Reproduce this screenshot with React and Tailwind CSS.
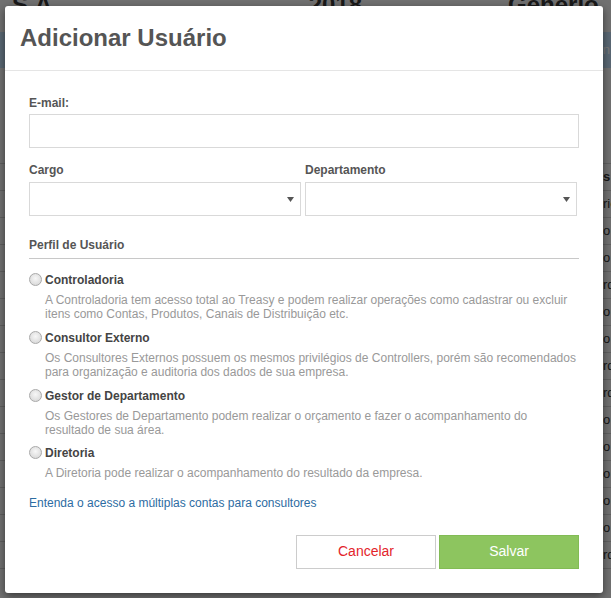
import React from 'react';

const rightCells = ['s', 'rio', 'o', 'o', 'rd', 'o', 'o', 'rd', 'rd', 'o', 'o', 'o', 'o', 'o', 'rd'];

const perfis = [
  {
    nome: 'Controladoria',
    linhas: [
      'A Controladoria tem acesso total ao Treasy e podem realizar operações como cadastrar ou excluir',
      'itens como Contas, Produtos, Canais de Distribuição etc.',
    ],
  },
  {
    nome: 'Consultor Externo',
    linhas: [
      'Os Consultores Externos possuem os mesmos privilégios de Controllers, porém são recomendados',
      'para organização e auditoria dos dados de sua empresa.',
    ],
  },
  {
    nome: 'Gestor de Departamento',
    linhas: [
      'Os Gestores de Departamento podem realizar o orçamento e fazer o acompanhamento do',
      'resultado de sua área.',
    ],
  },
  {
    nome: 'Diretoria',
    linhas: ['A Diretoria pode realizar o acompanhamento do resultado da empresa.'],
  },
];

const Caret = () => (
  <svg width="7" height="5" viewBox="0 0 7 5">
    <path d="M0 0 L7 0 L3.5 5 Z" fill="#555" />
  </svg>
);

const FakeSelect = () => (
  <div className="w-[272px] h-[34px] border border-[#d9d9d9] bg-white flex items-center justify-end pr-[6px]">
    <Caret />
  </div>
);

const App = () => {
  return (
    <div className="relative w-[611px] h-[598px] overflow-hidden bg-[#e2e2e2] font-['Liberation_Sans',Arial,sans-serif]">
      {/* page behind the modal */}
      <div className="flex mt-[-9px] h-[28px] leading-[28px] text-[24px] font-bold text-[#333]">
        <span className="ml-[12px]">S.A.</span>
        <span className="ml-[250px]">2018</span>
        <span className="ml-[146px]">Genério</span>
      </div>
      <div className="mt-[13px] h-[36px] bg-[#b4d0e8] flex items-center justify-end pr-[1px] text-[13px] text-[#f2f2f2]">
        in
      </div>
      <div className="mt-[95px] border-t border-[#c0c0c0]">
        {rightCells.map((t, i) => (
          <div
            key={i}
            className={`h-[27px] border-b border-[#c0c0c0] pl-[603px] flex items-center text-[13px] text-[#333] ${i === 0 ? 'font-bold' : ''}`}
          >
            {t}
          </div>
        ))}
      </div>

      {/* overlay + modal */}
      <div className="absolute inset-0 bg-black/50">
        <div className="ml-[5px] mt-[6px] w-[598px] bg-white rounded-[3px] shadow-[0_3px_9px_rgba(0,0,0,0.5)]">
          <div className="px-[15px] py-[19px] border-b border-[#e5e5e5]">
            <h2 className="text-[24px] leading-[26px] font-bold text-[#555]">Adicionar Usuário</h2>
          </div>

          <div className="px-[24px] pt-[24px] pb-[24px]">
            <label className="block text-[12px] leading-[17px] font-bold text-[#555] mb-[2px]">E-mail:</label>
            <div className="h-[34px] border border-[#d9d9d9] bg-white" />

            <div className="flex gap-[4px] mt-[14px]">
              <div>
                <label className="block text-[12px] leading-[17px] font-bold text-[#555] mb-[3px]">Cargo</label>
                <FakeSelect />
              </div>
              <div>
                <label className="block text-[12px] leading-[17px] font-bold text-[#555] mb-[3px]">Departamento</label>
                <FakeSelect />
              </div>
            </div>

            <div className="mt-[21px] pb-[4px] border-b border-[#c8c8c8] text-[12px] leading-[17px] font-bold text-[#555]">
              Perfil de Usuário
            </div>

            <div className="mt-[13px]">
              {perfis.map((p) => (
                <div key={p.nome} className="flex items-start gap-[3px] mb-[8px]">
                  <span className="mt-[1px] w-[13px] h-[13px] shrink-0 rounded-full border border-[#a9a9a9] bg-[radial-gradient(circle_at_50%_40%,#f7f7f7,#d2d2d2)]" />
                  <div>
                    <div className="text-[12px] leading-[17px] font-bold text-[#444]">{p.nome}</div>
                    <p className="mt-[4px] text-[12px] leading-[1.2] text-[#999]">
                      {p.linhas.map((l, i) => (
                        <React.Fragment key={i}>
                          {l}
                          {i < p.linhas.length - 1 && <br />}
                        </React.Fragment>
                      ))}
                    </p>
                  </div>
                </div>
              ))}
            </div>

            <a href="#" className="block mt-[14px] text-[12px] leading-[17px] text-[#2d6ca2]">
              Entenda o acesso a múltiplas contas para consultores
            </a>

            <div className="mt-[23px] flex justify-end gap-[3px]">
              <button className="w-[140px] h-[34px] border border-[#cccccc] bg-white text-[14px] text-[#e3242b]">
                Cancelar
              </button>
              <button className="w-[140px] h-[34px] border border-[#82bb55] bg-[#8dc55f] text-[14px] text-white">
                Salvar
              </button>
            </div>
          </div>
        </div>
      </div>
    </div>
  );
};

export default App;
